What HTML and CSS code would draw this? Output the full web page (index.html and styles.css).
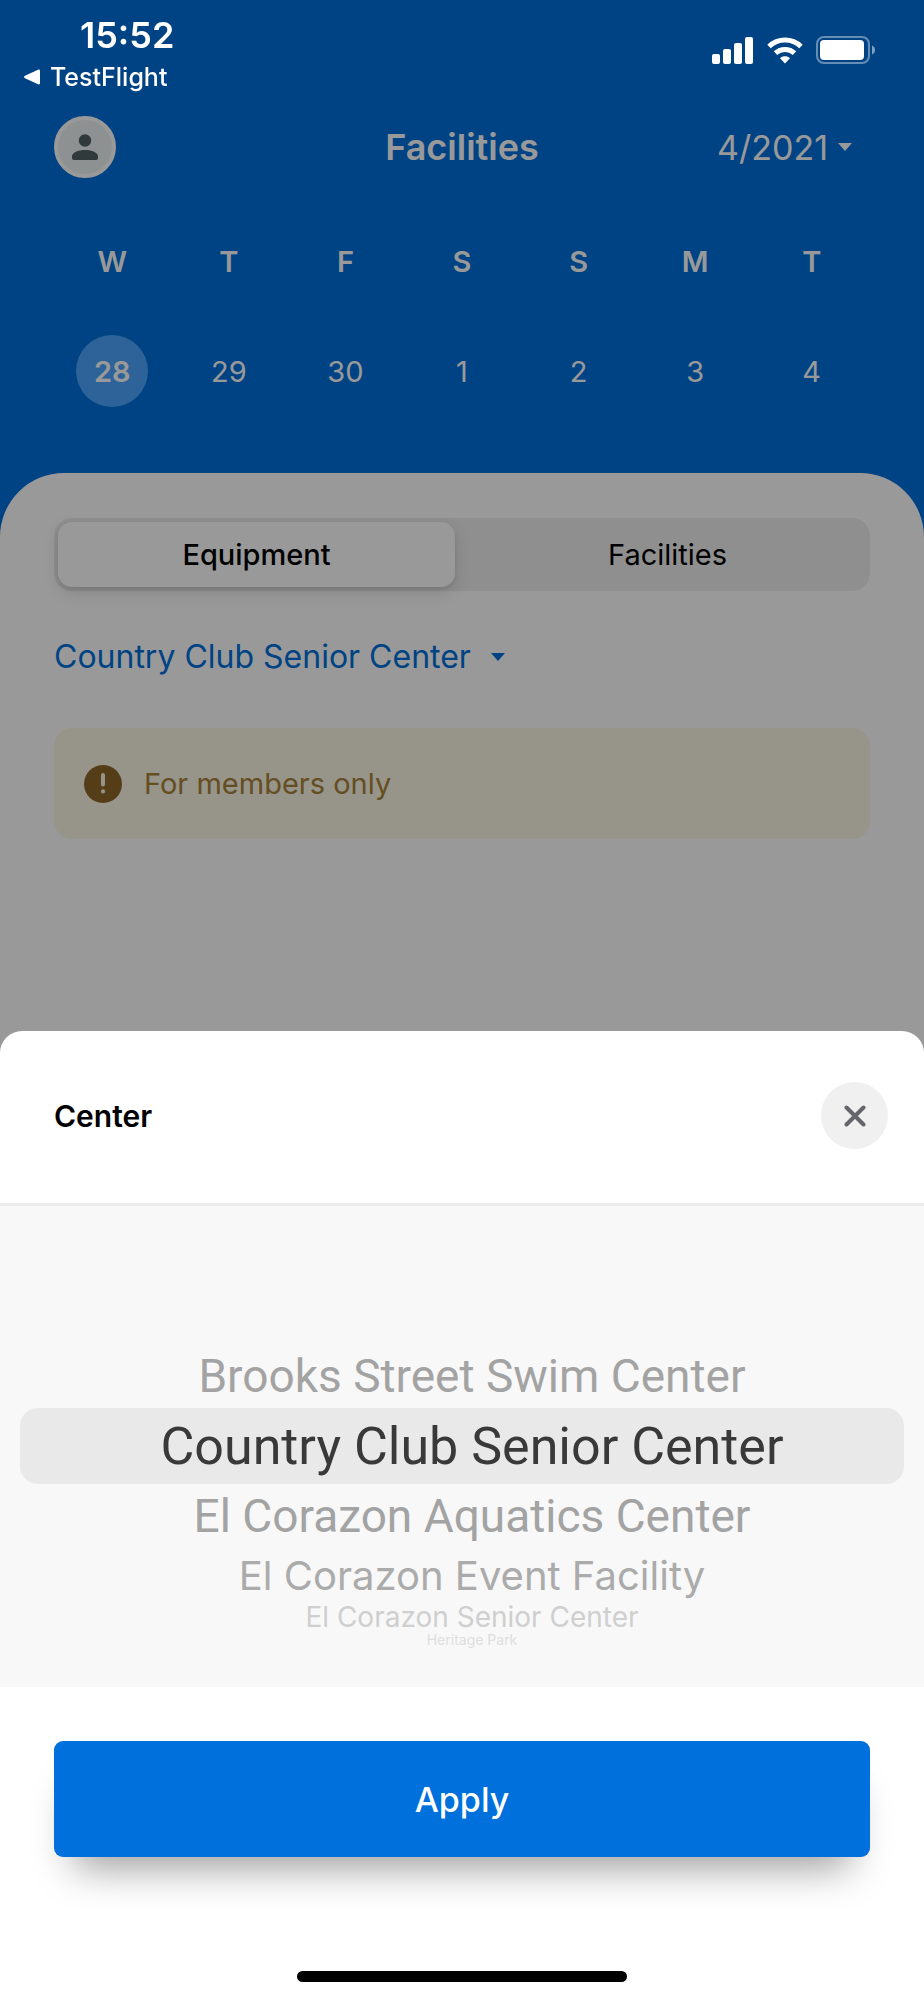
FILE: index.html
```html
<!DOCTYPE html>
<html lang="en">
<head>
  <meta charset="UTF-8" />
  <meta name="viewport" content="width=device-width, initial-scale=1" />
  <title>Facilities</title>
  <link rel="stylesheet" href="styles.css">
</head>
<body>
  <!-- Status Bar -->
  <div class="status-bar">
    <div class="status-left">
      <span class="time">15:52</span>
      <a class="back-link" href="#">
        <svg width="16" height="16" viewBox="0 0 16 16" fill="currentColor"><path d="M14 .8c1-.5 2 0 2 1v12.400c0 1-1 1.500-2 1L1 9.200c-1.200-.6-1.200-1.800 0-2.400z"/></svg>
        TestFlight
      </a>
    </div>
    <div class="status-icons">
      <svg width="42" height="27" viewBox="0 0 42 27" fill="#fff">
        <rect x="0" y="17" width="8" height="10" rx="2"/>
        <rect x="11" y="12" width="8" height="15" rx="2"/>
        <rect x="22" y="6" width="8" height="21" rx="2"/>
        <rect x="33" y="0" width="8" height="27" rx="2"/>
      </svg>
      <svg width="36" height="27" viewBox="0 0 36 27" fill="none" stroke="#fff" stroke-width="5">
        <path d="M2 9.500a23 23 0 0 1 32 0"/>
        <path d="M8.500 16.200a14 14 0 0 1 19 0"/>
        <path d="M18 26.500l-5-5.300c2.800-2.600 7.200-2.600 10 0z" fill="#fff" stroke="none"/>
      </svg>
      <svg width="60" height="28" viewBox="0 0 60 28">
        <rect x="1" y="1" width="52" height="26" rx="7" fill="none" stroke="#fff" stroke-opacity=".4" stroke-width="2"/>
        <rect x="4" y="4" width="44" height="20" rx="4" fill="#fff"/>
        <path d="M56 9.500c4 1.500 4 7.500 0 9z" fill="#fff" fill-opacity=".5"/>
      </svg>
    </div>
  </div>

  <!-- Header -->
  <header class="header">
    <div class="title-row">
      <button class="avatar" aria-label="Profile">
        <svg width="26" height="26" viewBox="0 0 26 26" fill="#505f63"><circle cx="13" cy="6.500" r="6.200"/><path d="M0 22.500C0 18.500 6 16 13 16s13 2.500 13 6.500V24c0 1.200-.8 2-2 2H2c-1.200 0-2-.8-2-2z"/></svg>
      </button>
      <h1>Facilities</h1>
      <button class="month">
        4/2021
        <svg width="14" height="8" viewBox="0 0 14 8" fill="currentColor"><path d="M0 0h14L7 8z"/></svg>
      </button>
    </div>

    <div class="week week-names">
      <span>W</span><span>T</span><span>F</span><span>S</span><span>S</span><span>M</span><span>T</span>
    </div>
    <div class="week">
      <button class="day active">28</button>
      <button class="day">29</button>
      <button class="day">30</button>
      <button class="day">1</button>
      <button class="day">2</button>
      <button class="day">3</button>
      <button class="day">4</button>
    </div>
  </header>

  <!-- Main Content -->
  <main class="panel">
    <div class="segmented">
      <button class="segment selected">Equipment</button>
      <button class="segment">Facilities</button>
    </div>

    <button class="center-link">
      Country Club Senior Center
      <svg width="14" height="8" viewBox="0 0 14 8" fill="currentColor"><path d="M0 0h14L7 8z"/></svg>
    </button>

    <div class="notice">
      <svg width="38" height="38" viewBox="0 0 38 38"><circle cx="19" cy="19" r="19" fill="#8e6728"/><path d="M19 10v9.500M19 26.200v.3" stroke="#fcf7e6" stroke-width="4" stroke-linecap="round"/></svg>
      <span>For members only</span>
    </div>
  </main>

  <div class="overlay"></div>

  <!-- Bottom Sheet -->
  <section class="sheet">
    <div class="sheet-header">
      <h2>Center</h2>
      <button class="close" aria-label="Close">
        <svg width="22" height="22" viewBox="0 0 22 22" stroke="#65656c" stroke-width="4" stroke-linecap="round"><path d="M2.500 2.500l17 17M19.500 2.500l-17 17"/></svg>
      </button>
    </div>

    <div class="picker">
      <label class="option near"><input type="radio" name="center">Brooks Street Swim Center</label>
      <label class="option current"><input type="radio" name="center" checked>Country Club Senior Center</label>
      <label class="option near"><input type="radio" name="center">El Corazon Aquatics Center</label>
      <label class="option far"><input type="radio" name="center">El Corazon Event Facility</label>
      <label class="option farther"><input type="radio" name="center">El Corazon Senior Center</label>
      <label class="option last"><input type="radio" name="center">Heritage Park</label>
    </div>

    <div class="sheet-footer">
      <button class="apply">Apply</button>
      <div class="home-bar"></div>
    </div>
  </section>
</body>
</html>
```
FILE: styles.css
```css
* {
  box-sizing: border-box;
}

body {
  font-family: Inter, "Liberation Sans", sans-serif;
  background: #0070dc;
  margin: 0;
  min-height: 100vh;
  display: flex;
  flex-direction: column;
}

button {
  font-family: inherit;
  border: none;
  background: none;
  padding: 0;
  color: inherit;
  cursor: pointer;
}

svg {
  flex-shrink: 0;
}

/* Status bar stays above the overlay */
.status-bar {
  position: relative;
  z-index: 2;
  display: flex;
  justify-content: space-between;
  align-items: center;
  height: 100px;
  padding: 0 48px 0 24px;
  color: #fff;
}

.status-left {
  display: flex;
  flex-direction: column;
  padding-top: 6px;
}

.time {
  font-size: 36px;
  line-height: 48px;
  font-weight: 600;
  padding-left: 56px;
}

.back-link {
  display: flex;
  align-items: center;
  gap: 10px;
  font-size: 25px;
  line-height: 36px;
  font-weight: 500;
  color: #fff;
  text-decoration: none;
}

.status-icons {
  display: flex;
  align-items: center;
  gap: 13px;
}

.header {
  color: #fff;
  padding: 16px 54px 66px;
}

.title-row {
  display: grid;
  grid-template-columns: 1fr auto 1fr;
  align-items: center;
}

.avatar {
  width: 62px;
  height: 62px;
  border-radius: 50%;
  border: 4px solid #fff;
  background: #ecf2f3;
  display: flex;
  align-items: center;
  justify-content: center;
}

h1 {
  margin: 0;
  font-size: 36px;
  line-height: 48px;
  font-weight: 600;
}

.month {
  justify-self: end;
  display: flex;
  align-items: center;
  gap: 10px;
  font-size: 34px;
  padding-right: 18px;
}

.week {
  display: grid;
  grid-template-columns: repeat(7, 1fr);
  justify-items: center;
  font-size: 29px;
}

.week-names {
  font-weight: 600;
  line-height: 48px;
  padding: 60px 0 49px;
}

.day {
  width: 72px;
  height: 72px;
  border-radius: 50%;
  font-size: 29px;
}

.day.active {
  background: #4da6ff;
  font-weight: 600;
}

.panel {
  flex: 1;
  background: #fff;
  border-radius: 64px 64px 0 0;
  padding: 45px 54px;
}

.segmented {
  display: flex;
  gap: 14px;
  background: #eee;
  border-radius: 18px;
  padding: 4px;
}

.segment {
  flex: 1;
  height: 65px;
  border-radius: 14px;
  font-size: 29px;
  color: #000;
}

.segment.selected {
  background: #fff;
  font-weight: 500;
  box-shadow: 0 6px 16px rgba(0,0,0,0.12), 0 2px 4px rgba(0,0,0,0.08);
}

.center-link {
  display: flex;
  align-items: center;
  gap: 20px;
  font-size: 32px;
  line-height: 48px;
  color: #0070dc;
  margin: 42px 0 47px;
}

.notice {
  display: flex;
  align-items: center;
  gap: 22px;
  background: #fcf7e6;
  color: #a78239;
  border-radius: 18px;
  padding: 32px 30px;
  font-size: 29px;
  line-height: 47px;
}

.overlay {
  position: fixed;
  inset: 0;
  background: rgba(0,0,0,0.4);
}

.sheet {
  position: fixed;
  left: 0;
  right: 0;
  bottom: 0;
  background: #fff;
  border-radius: 22px 22px 0 0;
}

.sheet-header {
  display: flex;
  justify-content: space-between;
  align-items: center;
  padding: 51px 36px 54px 54px;
  border-bottom: 3px solid #ececec;
}

h2 {
  margin: 0;
  font-size: 30px;
  font-weight: 600;
}

.close {
  width: 67px;
  height: 67px;
  border-radius: 50%;
  background: #f0f0f0;
  display: flex;
  align-items: center;
  justify-content: center;
}

.picker {
  background: #f8f8f8;
  padding: 138px 20px 39px;
}

.option {
  display: flex;
  align-items: center;
  justify-content: center;
  padding-left: 20px;
  white-space: nowrap;
}

.option input {
  position: absolute;
  opacity: 0;
}

.near {
  font-family: Roboto, sans-serif;
  height: 64px;
  font-size: 46px;
  color: #a3a3a3;
}

.current {
  font-family: Roboto, sans-serif;
  height: 76px;
  font-size: 52px;
  color: #393939;
  background: #e9e9e9;
  border-radius: 18px;
}

.far {
  height: 54px;
  font-size: 40px;
  color: #ababab;
}

.farther {
  height: 30px;
  font-size: 28px;
  line-height: 30px;
  color: #cfcfcf;
}

.last {
  height: 16px;
  font-size: 14px;
  line-height: 16px;
  color: #dedede;
}

.sheet-footer {
  padding: 54px 54px 18px;
}

.apply {
  width: 100%;
  height: 116px;
  border-radius: 9px;
  background: #0070dc;
  color: #fff;
  font-size: 34px;
  font-weight: 500;
  box-shadow: 0 30px 40px -20px rgba(0,0,0,0.4);
}

.home-bar {
  width: 330px;
  height: 11px;
  border-radius: 6px;
  background: #000;
  margin: 114px auto 0;
}
```
